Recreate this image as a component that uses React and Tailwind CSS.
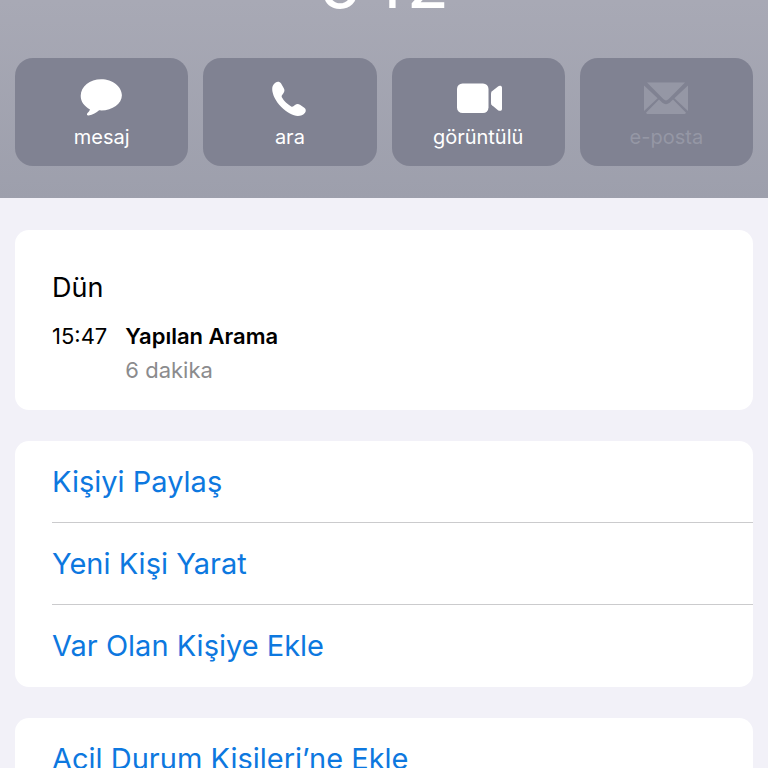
const MessageIcon = () => (
  <svg viewBox="0 0 48 44" className="w-12 h-11" fill="currentColor" aria-hidden="true">
    <path d="M23.200 3.200C11.800 3.200 2.700 10.500 2.700 19.800c0 5.900 3.700 10.800 9.300 13.600-.5 1.500-1.400 2.600-2.500 3.700-1.200 1.300-.4 2.700 1.100 2.500 4.200-.6 7.800-3.200 10.500-5.300.8.100 1.400.100 2.100.100 11.400 0 20.700-6.800 20.700-15.200S34.600 3.200 23.200 3.200z" />
  </svg>
)

const PhoneIcon = () => (
  <svg viewBox="0 0 48 44" className="w-12 h-11" fill="currentColor" aria-hidden="true">
    <path d="M6.200 13c0-2.700 1.100-4.700 3.100-6.200 2.200-1.600 4.400-1.300 5.800.8l2.700 4.700c1 1.800.8 3.400-.4 5l-1.400 2c-.5.8-.4 1.500 0 2.300 1 1.700 2.500 3.600 4.200 5.200 1.700 1.600 3.300 2.800 5 3.700.8.400 1.500.3 2.200-.2l1.600-1.200c1.600-1.200 3.200-1.300 5-.3l4.300 2.900c1.700 1.300 2 3.200.7 5-1.600 2.200-4.300 3.200-7.200 3.200-4.700 0-10.800-3.300-16.500-8.900C9.500 25.300 6.200 18 6.200 13z" />
  </svg>
)

const VideoIcon = () => (
  <svg viewBox="0 0 48 44" className="w-12 h-11" fill="currentColor" aria-hidden="true">
    <rect x="3" y="7.500" width="31.500" height="29.500" rx="5.500" />
    <path d="M37 17.500c0-.9.400-1.600 1-2.200l6-4.900c1.500-1.200 4-.7 4 1.300v21.200c0 2-2.500 2.500-4 1.300l-6-4.900c-.6-.6-1-1.300-1-2.200z" />
  </svg>
)

const MailIcon = () => (
  <svg viewBox="0 0 48 44" className="w-12 h-11" fill="currentColor" aria-hidden="true">
    <path d="M5 6.600h38L26.700 23c-1.900 1.900-3.500 1.900-5.400 0z" />
    <path d="M2 9.500V35l13.600-12.800z" />
    <path d="M46 9.500V35L32.400 22.200z" />
    <path d="M17 23.600l2.600 2.500c2.900 2.700 5.900 2.700 8.800 0l2.600-2.500L44 36.800c-.4.800-1.100 1.200-2.200 1.200H6.200c-1.100 0-1.800-.4-2.200-1.200z" />
  </svg>
)

const actions = [
  { label: 'mesaj', Icon: MessageIcon },
  { label: 'ara', Icon: PhoneIcon },
  { label: 'görüntülü', Icon: VideoIcon },
  { label: 'e-posta', Icon: MailIcon, disabled: true },
]

const contactOptions = ['Kişiyi Paylaş', 'Yeni Kişi Yarat', 'Var Olan Kişiye Ekle']
const emergencyOptions = ['Acil Durum Kişileri’ne Ekle']

function OptionList({ options }) {
  return (
    <ul className="rounded-[14px] bg-white pl-[37px]">
      {options.map(option => (
        <li key={option} className="h-[82px] border-b border-[#cbcbcd] last:border-b-0">
          <button type="button" className="block h-full w-full text-left text-[29px] text-[#0d78df]">
            {option}
          </button>
        </li>
      ))}
    </ul>
  )
}

export default function App() {
  return (
    <div className="h-screen overflow-hidden bg-[#f2f1f8] font-['Inter',sans-serif]">
      <header className="overflow-hidden bg-linear-to-b from-[#a8a9b5] to-[#9d9fac] px-[15px] pb-8">
        <h1 className="-mt-[52px] mb-10 text-center text-[70px] leading-[70px] text-white">542</h1>
        <div className="grid grid-cols-4 gap-[15px]">
          {actions.map(({ label, Icon, disabled }) => (
            <button
              key={label}
              type="button"
              disabled={disabled}
              className="flex h-[108px] flex-col items-center rounded-[18px] bg-[#808292] pt-[18px] text-white disabled:text-[#9597a5]"
            >
              <Icon />
              <span className="text-[20px] leading-[34px]">{label}</span>
            </button>
          ))}
        </div>
      </header>

      <main className="flex flex-col gap-[31px] px-[15px] pt-8">
        {/* Son aramalar */}
        <section className="rounded-[14px] bg-white px-[37px] pt-10 pb-[23px] text-black">
          <h2 className="text-[27px] leading-9">Dün</h2>
          <div className="mt-[13px] flex gap-[18px] text-[22px] leading-[34px]">
            <time>15:47</time>
            <div>
              <p className="font-semibold">Yapılan Arama</p>
              <p className="text-[#8b8b8d]">6 dakika</p>
            </div>
          </div>
        </section>

        <OptionList options={contactOptions} />
        <OptionList options={emergencyOptions} />
      </main>
    </div>
  )
}
